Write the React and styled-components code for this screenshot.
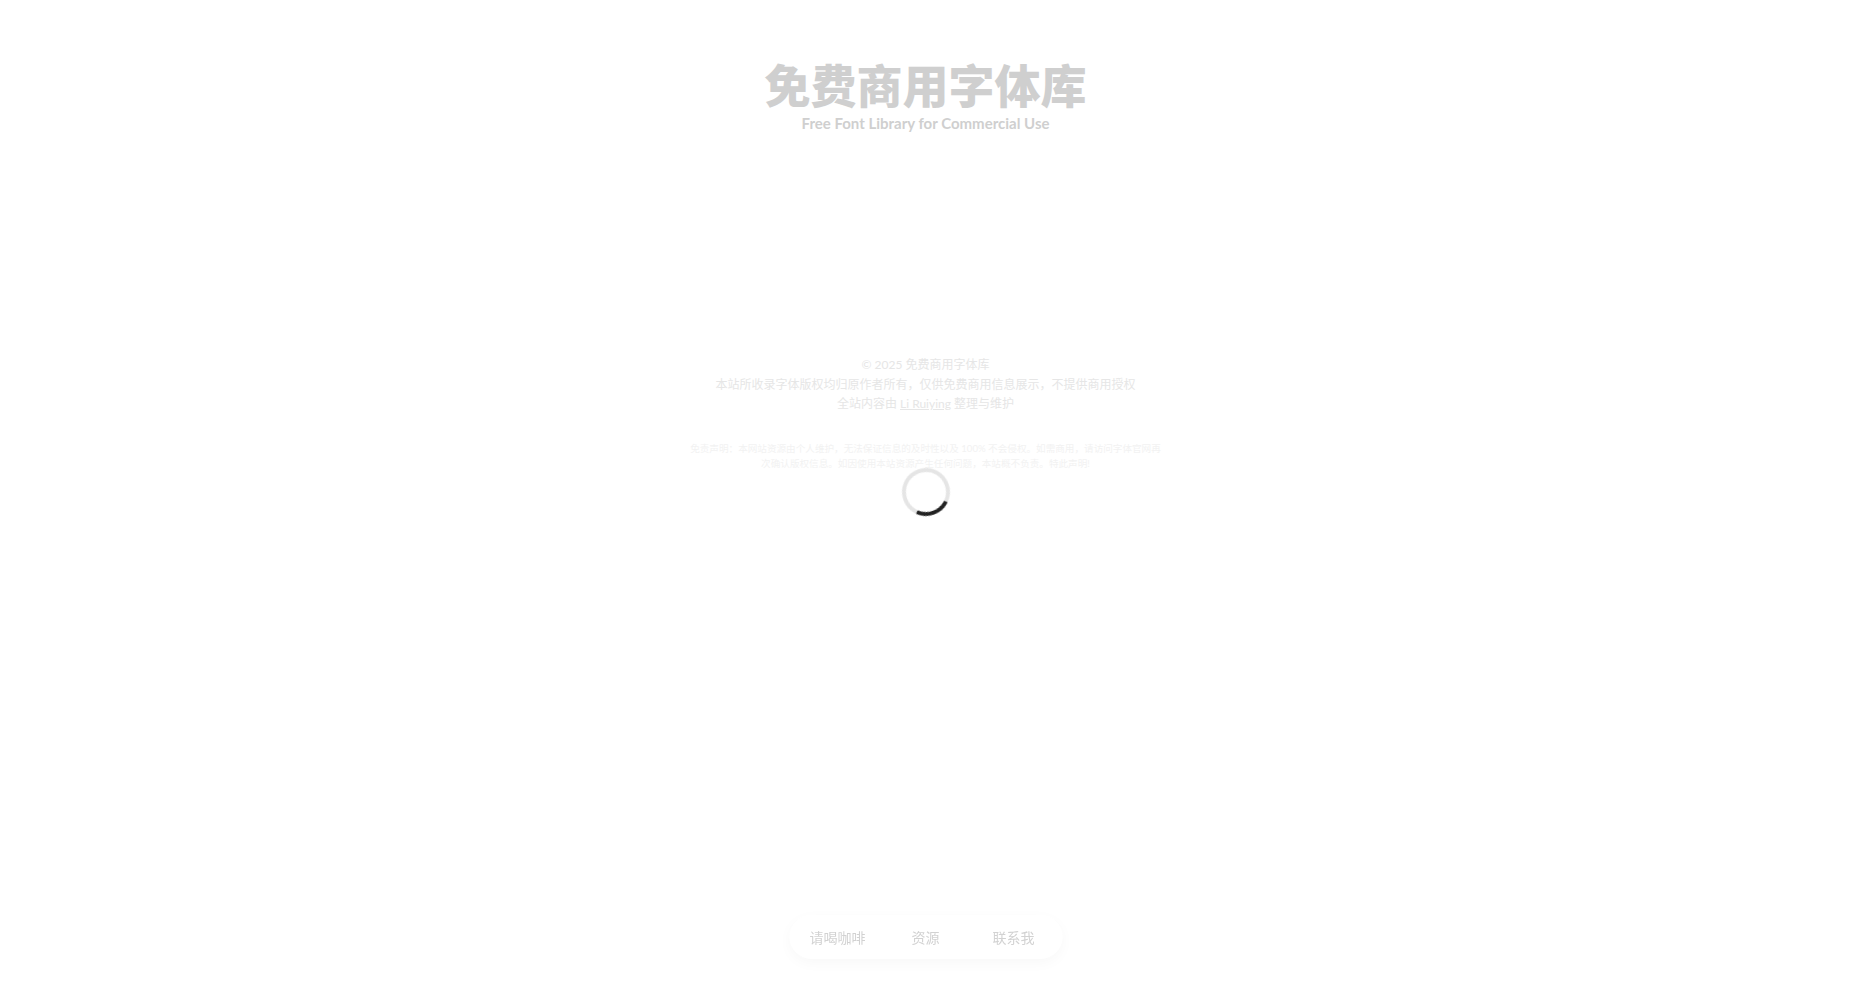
import React from "react";
import styled, { createGlobalStyle } from "styled-components";

const fonts = `Lato, "Noto Sans CJK SC", sans-serif`;

const GlobalStyle = createGlobalStyle`
  html, body {
    margin: 0;
    padding: 0;
    background: #fff;
    font-family: ${fonts};
  }
`;

const Page = styled.div`
  min-height: 100vh;
  box-sizing: border-box;
  display: flex;
  flex-direction: column;
  align-items: center;
  padding-top: 59px;
`;

const Header = styled.header`
  display: flex;
  flex-direction: column;
  align-items: center;
`;

const Title = styled.h1`
  margin: 0;
  font-size: 46px;
  line-height: 54px;
  font-weight: 900;
  color: #cfcfcf;
`;

const Subtitle = styled.p`
  margin: 0;
  font-size: 15px;
  line-height: 20px;
  font-weight: 700;
  color: #cfcfcf;
`;

const Footer = styled.footer`
  margin-top: 222px;
  display: flex;
  flex-direction: column;
  align-items: center;
  text-align: center;
`;

const Line = styled.p`
  margin: 0;
  font-size: 12px;
  line-height: 19.5px;
  color: #e6e6e6;
`;

const Author = styled.a`
  color: inherit;
  text-decoration: underline;
`;

const Disclaimer = styled.p`
  margin: 27px 0 0;
  width: 474px;
  font-size: 9.6px;
  line-height: 15px;
  color: #f2f2f2;
`;

const Spinner = styled.div`
  position: fixed;
  left: 50%;
  top: 50%;
  width: 48px;
  height: 48px;
  margin: -24px 0 0 -24px;
  box-sizing: border-box;
  border-radius: 50%;
  border: 4px solid #e5e5e5;
  border-bottom-color: #222;
  transform: rotate(-20deg);
`;

const Dock = styled.nav`
  position: fixed;
  left: 50%;
  bottom: 24px;
  transform: translateX(-50%);
  height: 44px;
  box-sizing: border-box;
  padding: 0 4.5px;
  display: grid;
  grid-template-columns: repeat(3, 88px);
  align-items: center;
  justify-items: center;
  border-radius: 22px;
  background: #fff;
  box-shadow: 0 4px 14px rgba(0, 0, 0, 0.03);
`;

const DockLink = styled.a`
  font-size: 14px;
  color: #d2d2d2;
  white-space: nowrap;
`;

export default function App() {
  return (
    <Page>
      <GlobalStyle />
      <Header>
        <Title>免费商用字体库</Title>
        <Subtitle>Free Font Library for Commercial Use</Subtitle>
      </Header>
      <Footer>
        <Line>© 2025 免费商用字体库</Line>
        <Line>本站所收录字体版权均归原作者所有，仅供免费商用信息展示，不提供商用授权</Line>
        <Line>
          全站内容由 <Author>Li Ruiying</Author> 整理与维护
        </Line>
        <Disclaimer>
          免责声明：本网站资源由个人维护，无法保证信息的及时性以及 100% 不会侵权。如需商用，请访问字体官网再次确认版权信息。如因使用本站资源产生任何问题，本站概不负责。特此声明!
        </Disclaimer>
      </Footer>
      <Spinner />
      <Dock>
        <DockLink>请喝咖啡</DockLink>
        <DockLink>资源</DockLink>
        <DockLink>联系我</DockLink>
      </Dock>
    </Page>
  );
}
